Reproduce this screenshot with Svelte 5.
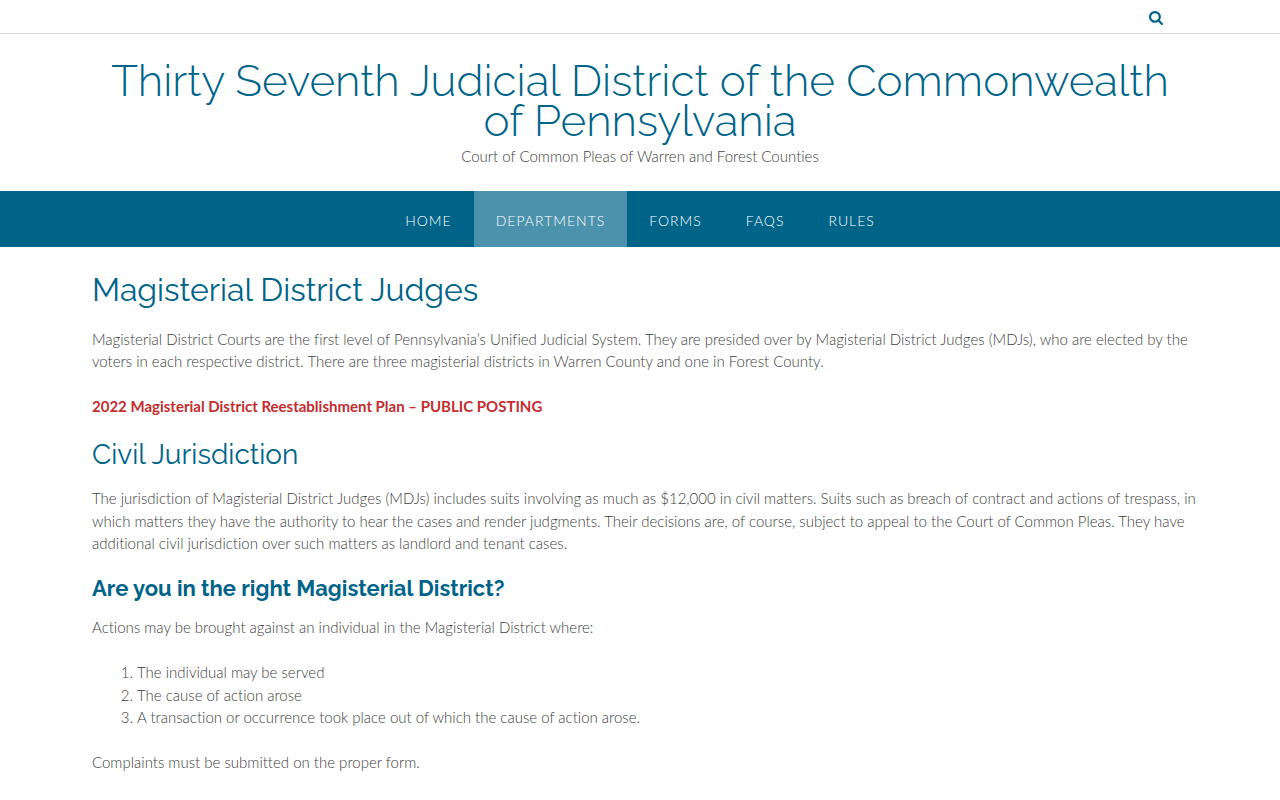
<script lang="ts">
  interface NavItem {
    label: string;
    href: string;
    active?: boolean;
  }

  const navItems: NavItem[] = [
    { label: 'Home', href: '#home' },
    { label: 'Departments', href: '#departments', active: true },
    { label: 'Forms', href: '#forms' },
    { label: 'FAQs', href: '#faqs' },
    { label: 'Rules', href: '#rules' },
  ];

  const venues = [
    'The individual may be served',
    'The cause of action arose',
    'A transaction or occurrence took place out of which the cause of action arose.',
  ];
</script>

<div class="top-bar">
  <div class="container">
    <button class="search-toggle" aria-label="Search">
      <svg viewBox="0 0 1664 1664" width="14" height="14" aria-hidden="true">
        <path d="M1152 704q0-185-131.500-316.500T704 256 387.500 387.500 256 704t131.500 316.500T704 1152t316.500-131.500T1152 704zm512 832q0 52-38 90t-90 38q-54 0-90-38l-343-342q-179 124-399 124-143 0-273.500-55.500t-225-150-150-225T0 704t55.500-273.500 150-225 225-150T704 0t273.500 55.500 225 150 150 225T1408 704q0 220-124 399l343 343q37 37 37 90z" />
      </svg>
    </button>
  </div>
</div>

<header class="branding">
  <h1 class="site-title"><a href="#home">Thirty Seventh Judicial District of the Commonwealth of Pennsylvania</a></h1>
  <p class="tagline">Court of Common Pleas of Warren and Forest Counties</p>
</header>

<nav class="main-nav" aria-label="Main">
  <ul>
    {#each navItems as item}
      <li><a href={item.href} class:active={item.active}>{item.label}</a></li>
    {/each}
  </ul>
</nav>

<main class="container content">
  <h2 class="page-title">Magisterial District Judges</h2>
  <p>
    Magisterial District Courts are the first level of Pennsylvania’s Unified Judicial System. They are presided over by
    Magisterial District Judges (MDJs), who are elected by the voters in each respective district. There are three
    magisterial districts in Warren County and one in Forest County.
  </p>
  <p><a class="posting" href="#posting">2022 Magisterial District Reestablishment Plan – PUBLIC POSTING</a></p>

  <h3>Civil Jurisdiction</h3>
  <p>
    The jurisdiction of Magisterial District Judges (MDJs) includes suits involving as much as $12,000 in civil matters.
    Suits such as breach of contract and actions of trespass, in which matters they have the authority to hear the cases
    and render judgments. Their decisions are, of course, subject to appeal to the Court of Common Pleas. They have
    additional civil jurisdiction over such matters as landlord and tenant cases.
  </p>

  <h4>Are you in the right Magisterial District?</h4>
  <p>Actions may be brought against an individual in the Magisterial District where:</p>
  <ol>
    {#each venues as venue}
      <li>{venue}</li>
    {/each}
  </ol>
  <p>Complaints must be submitted on the proper form.</p>
</main>

<style>
  :global(body) {
    background: #fff;
    color: #404040;
    font-family: Lato, "Liberation Sans", sans-serif;
    font-size: 15px;
    font-weight: 300;
    font-variant-ligatures: none;
    line-height: 1.5;
  }
  .container {
    box-sizing: border-box;
    max-width: 1096px;
    margin: 0 auto;
  }
  .top-bar { border-bottom: 1px solid #ddd; }
  .top-bar .container {
    display: flex;
    justify-content: flex-end;
    align-items: center;
    height: 33px;
    padding: 3px 25px 0;
  }
  .search-toggle {
    display: flex;
    padding: 0;
    border: 0;
    background: transparent;
    color: #006489;
    cursor: pointer;
  }
  .search-toggle svg { fill: currentColor; }
  .branding {
    max-width: 1096px;
    margin: 0 auto;
    padding: 27px 0 23px;
    text-align: center;
  }
  .site-title, .page-title, h3, h4 {
    font-family: Raleway, Lato, sans-serif;
    color: #006489;
  }
  .site-title {
    margin: 0;
    font-size: 44px;
    font-weight: 300;
    line-height: 40px;
  }
  .site-title a { color: inherit; text-decoration: none; }
  .tagline { margin: 4px 0 0; }
  .main-nav { background: #006489; }
  .main-nav ul {
    display: flex;
    justify-content: center;
    margin: 0;
    padding: 0;
    list-style: none;
  }
  .main-nav a {
    display: block;
    padding: 3px 22px 0;
    color: #fff;
    font-size: 14px;
    font-weight: 300;
    letter-spacing: 1px;
    line-height: 53px;
    text-decoration: none;
    text-transform: uppercase;
  }
  .main-nav a:hover, .main-nav a.active { background: #4c92ac; }
  .content { padding: 24px 0; }
  .content p, ol { margin: 0 -12px 1.5em 0; }
  .page-title {
    margin: 0 0 19px;
    font-size: 32px;
    font-weight: 400;
    line-height: 38px;
  }
  h3 {
    margin: 0 0 17px;
    font-size: 28px;
    font-weight: 400;
    line-height: 30px;
  }
  h4 {
    margin: 0 0 17px;
    font-size: 22px;
    font-weight: 700;
    line-height: 22px;
  }
  .posting { color: #c32d2d; font-weight: 700; text-decoration: none; }
  ol { padding: 0 0 0 45px; }
</style>
